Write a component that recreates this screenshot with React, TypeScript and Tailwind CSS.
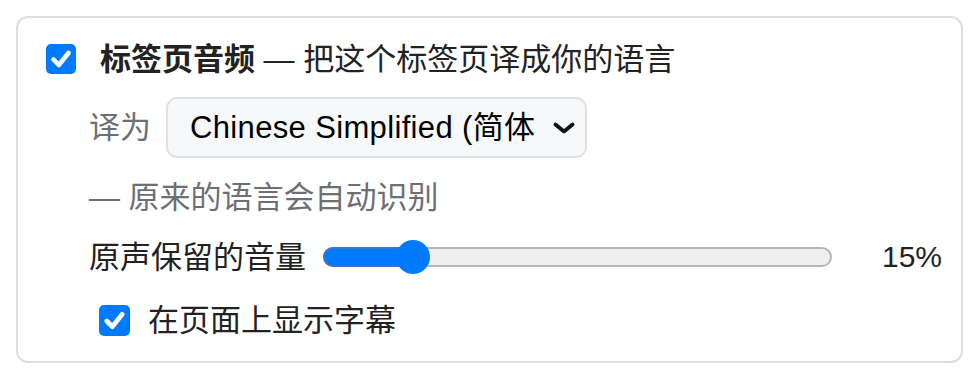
import React from "react";

const font = { fontFamily: '"Liberation Sans", "Noto Sans CJK SC", sans-serif' };

function Check({ size }: { size: number }) {
  return (
    <div
      className="flex items-center justify-center rounded-[5px] bg-[#007aff] shrink-0"
      style={{ width: size, height: size }}
    >
      <svg width={size} height={size} viewBox="0 0 30 30">
        <path
          d="M7.5 15.5 L12.8 21 L22.5 9"
          fill="none"
          stroke="#fff"
          strokeWidth="4.6"
          strokeLinecap="round"
          strokeLinejoin="round"
        />
      </svg>
    </div>
  );
}

export default function App() {
  return (
    <div className="w-[979px] h-[379px] bg-white p-4" style={font}>
      <div className="w-[947px] h-[347px] rounded-[12px] border-2 border-[#dedede] pl-[28px] pr-[19px] pt-[26px] flex flex-col">
        {/* Title row */}
        <div className="flex items-center h-[30px]">
          <Check size={30} />
          <div className="ml-[24px] text-[31px] leading-none text-[#222] whitespace-nowrap">
            <span className="font-bold">标签页音频</span>
            <span> — 把这个标签页译成你的语言</span>
          </div>
        </div>

        {/* Translate to */}
        <div className="flex items-center mt-[23px] ml-[43px] h-[61px]">
          <span className="text-[31px] leading-none text-[#6d6f74]">译为</span>
          <div className="ml-[15px] w-[421px] h-[61px] rounded-[11px] border-2 border-[#e1e1e1] bg-[#f7f8fa] flex items-center pl-[22px] pr-[10px]">
            <span className="text-[31px] tracking-[0.35px] leading-none text-black whitespace-nowrap flex-1">
              Chinese Simplified (简体
            </span>
            <svg width="22" height="12" viewBox="0 0 22 12" className="shrink-0">
              <polyline
                points="2.5,2.5 11,9.5 19.5,2.5"
                fill="none"
                stroke="#111"
                strokeWidth="3.8"
                strokeLinecap="round"
                strokeLinejoin="round"
              />
            </svg>
          </div>
        </div>

        {/* Note */}
        <div className="flex items-center mt-[19px] ml-[43px] h-[40px]">
          <span className="text-[31px] leading-none text-[#6d6f74] whitespace-nowrap">— 原来的语言会自动识别</span>
        </div>

        {/* Slider row */}
        <div className="flex items-center mt-[20px] ml-[43px] h-[40px]">
          <span className="text-[31px] leading-none text-[#222] whitespace-nowrap">原声保留的音量</span>
          <div className="ml-[17px] relative w-[509px] h-[20px]">
            <div className="absolute inset-0 rounded-full border-2 border-[#b6b6b6] bg-[#efefef]" />
            <div className="absolute left-0 top-0 h-[20px] w-[95px] rounded-full border-2 border-[#3d74c4] bg-[#007aff]" />
            <div className="absolute left-[73px] top-[-7px] w-[34px] h-[34px] rounded-full bg-[#007aff]" />
          </div>
          <span className="ml-auto text-[30px] leading-none text-[#222]">15%</span>
        </div>

        {/* Subtitles */}
        <div className="flex items-center mt-[28px] ml-[53px] h-[31px]">
          <Check size={31} />
          <span className="ml-[18px] text-[31px] leading-none text-[#222] whitespace-nowrap">在页面上显示字幕</span>
        </div>
      </div>
    </div>
  );
}
